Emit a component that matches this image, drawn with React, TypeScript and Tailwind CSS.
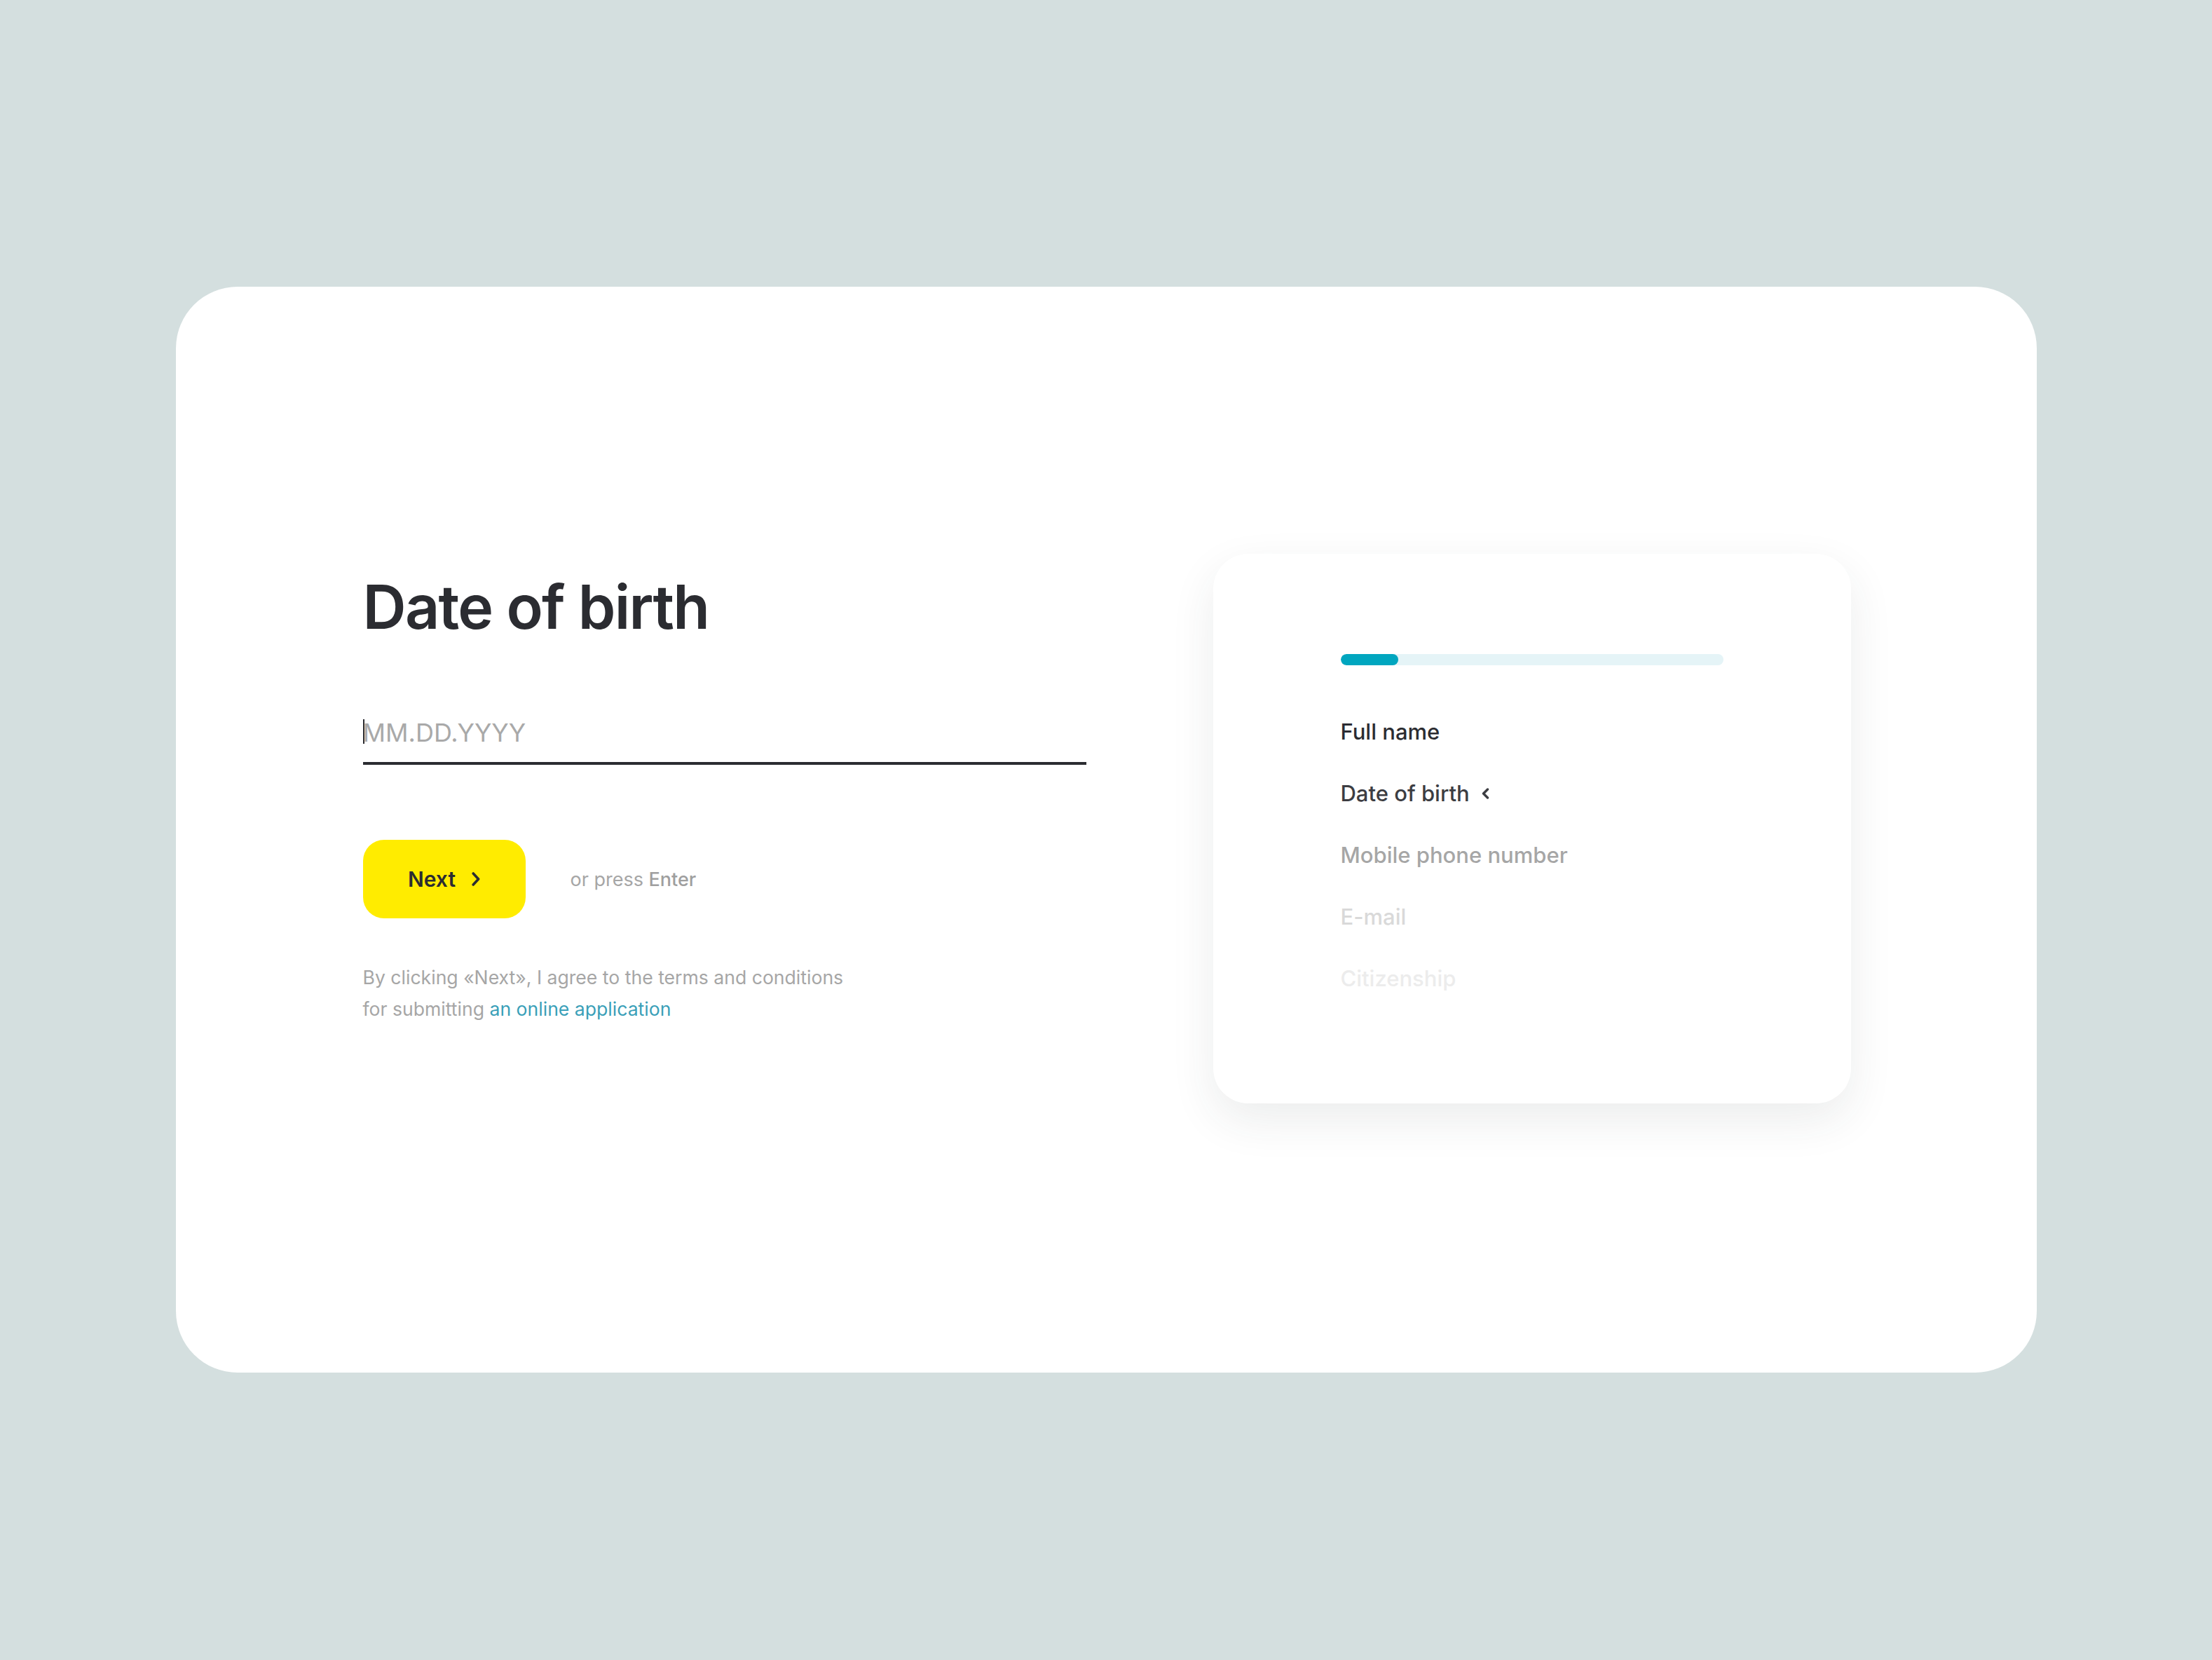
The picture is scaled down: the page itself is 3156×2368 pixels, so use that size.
import React from "react";

const font = { fontFamily: 'Inter, "Noto Sans", Arial, sans-serif' };

function ChevronRight() {
  return (
    <svg width="12" height="22" viewBox="0 0 12 22" fill="none" className="block">
      <path d="M2.2 3 L9.6 11 L2.2 19" stroke="#2b2c31" strokeWidth="3.6" strokeLinecap="round" strokeLinejoin="round" />
    </svg>
  );
}

function ChevronLeft() {
  return (
    <svg width="13" height="16" viewBox="0 0 13 16" fill="none" className="block">
      <path d="M9.5 2 L3.5 8 L9.5 14" stroke="#3c3d42" strokeWidth="3.4" strokeLinecap="round" strokeLinejoin="round" />
    </svg>
  );
}

export default function App() {
  const steps = [
    { label: "Full name", color: "text-[#2b2c31]" },
    { label: "Date of birth", color: "text-[#3c3d42]", active: true },
    { label: "Mobile phone number", color: "text-[#a6a6a6]" },
    { label: "E-mail", color: "text-[#d9d9d9]" },
    { label: "Citizenship", color: "text-[#ececec]" },
  ];

  return (
    <div className="min-h-screen w-full bg-[#d4dfdf] flex items-start justify-center pt-[409px]" style={font}>
      <div className="w-[2655px] h-[1549px] bg-white rounded-[88px] flex items-start justify-between pl-[267px] pr-[265px] pt-[381px]">
        {/* Left column */}
        <div className="w-[1032px] pt-[33px]">
          <h1 className="text-[86px] leading-none font-semibold text-[#2b2c31] tracking-[-0.02em]">
            Date of birth
          </h1>

          <div className="relative mt-[94px]">
            <input
              type="text"
              placeholder="MM.DD.YYYY"
              className="block w-full h-[88px] border-b-4 border-[#2b2c31] text-[36px] font-normal text-[#2b2c31] placeholder:text-[#a9a9a9] outline-none bg-transparent"
              style={font}
            />
            <div className="absolute left-0 top-[23px] h-[35px] w-[2px] bg-[#2b2c31]" />
          </div>

          <div className="mt-[107px] flex items-center">
            <button className="w-[232px] h-[112px] rounded-[30px] bg-[#ffec00] flex items-center justify-center gap-[23px]">
              <span className="text-[30px] leading-none font-semibold text-[#2b2c31]">Next</span>
              <ChevronRight />
            </button>
            <span className="ml-[64px] text-[27px] leading-none text-[#a6a6a6]">
              or press <span className="font-medium text-[#9f9f9f]">Enter</span>
            </span>
          </div>

          <p className="mt-[62px] text-[26.6px] leading-[45px] text-[#a6a6a6]">
            By clicking «Next», I agree to the terms and conditions
            <br />
            for submitting <a className="text-[#3a9fb8]">an online application</a>
          </p>
        </div>

        {/* Right panel */}
        <div className="w-[910px] h-[784px] bg-white rounded-[50px] shadow-[0_24px_64px_rgba(40,60,60,0.09)] pl-[182px] pt-[143px]">
          <div className="w-[546px] h-[16px] rounded-full bg-[#e5f4f7] overflow-hidden">
            <div className="h-full w-[82px] rounded-full bg-[#00a6bf]" />
          </div>
          <div className="mt-[51px] flex flex-col">
            {steps.map((s) => (
              <div key={s.label} className={`h-[88px] flex items-center text-[31px] font-medium ${s.color}`}>
                <span className="leading-[88px]">{s.label}</span>
                {s.active && (
                  <span className="ml-[16px]">
                    <ChevronLeft />
                  </span>
                )}
              </div>
            ))}
          </div>
        </div>
      </div>
    </div>
  );
}
